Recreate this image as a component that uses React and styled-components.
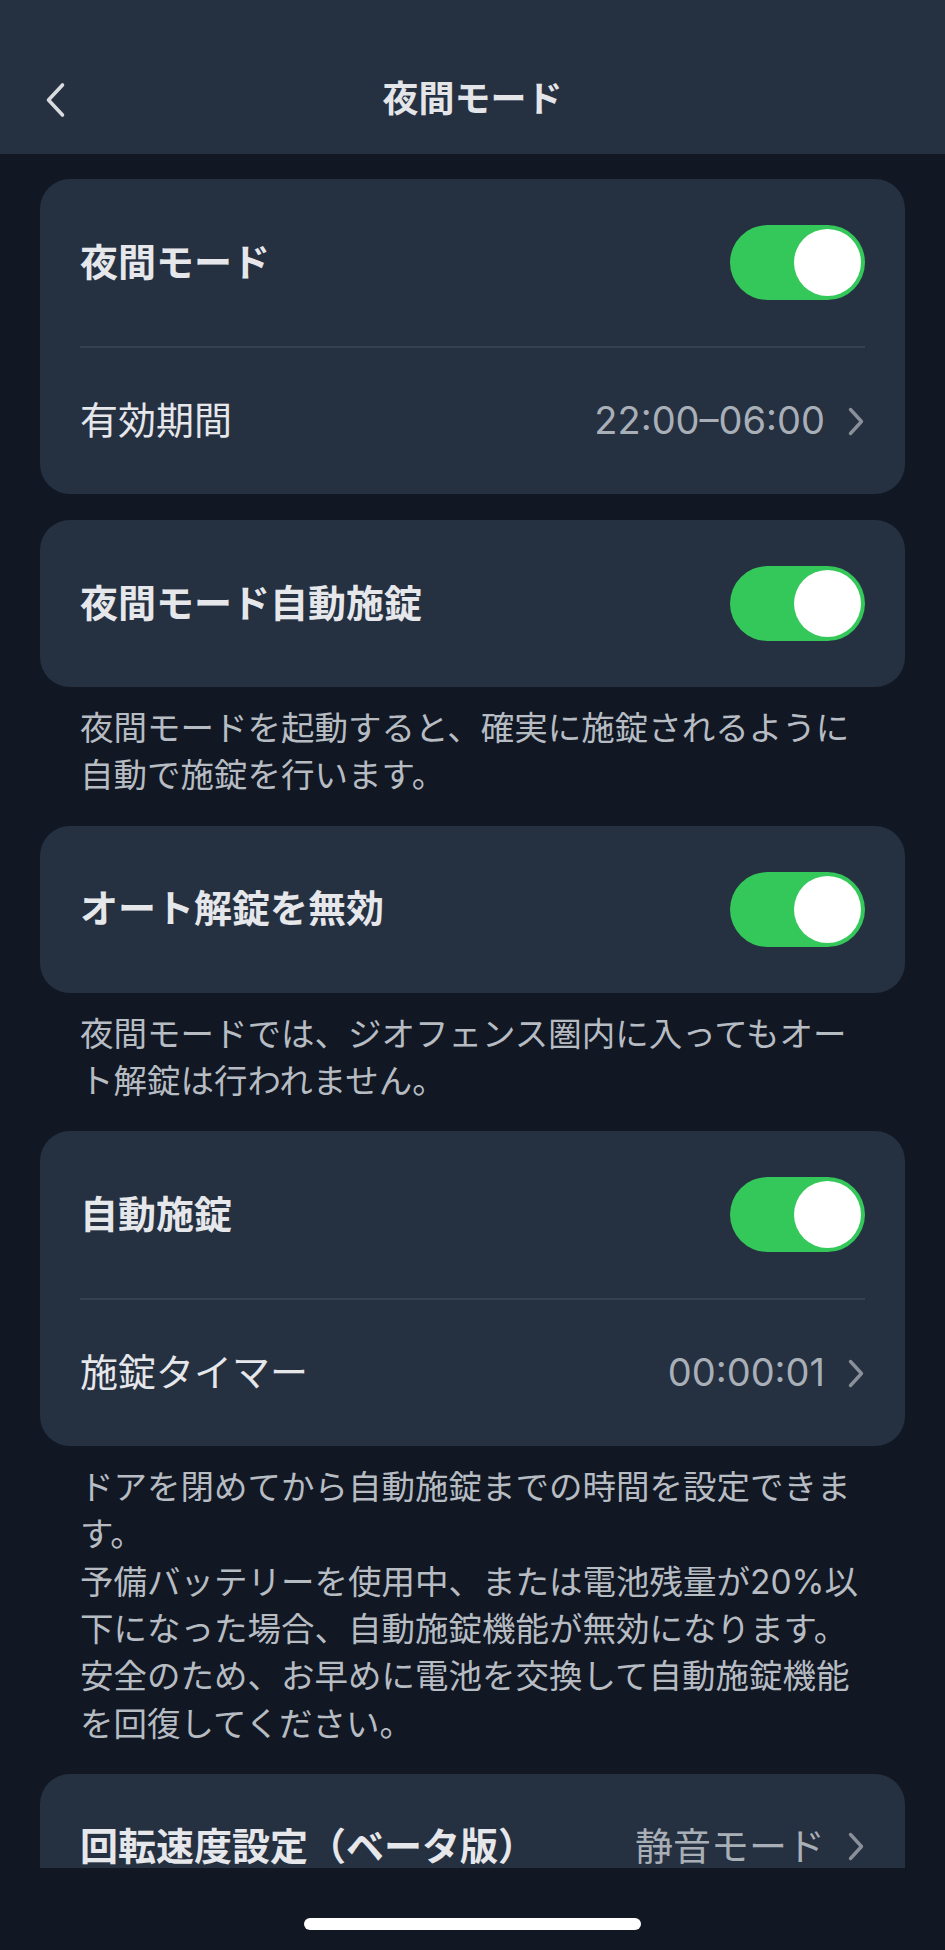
import styled, { createGlobalStyle } from "styled-components"

const GlobalStyle = createGlobalStyle`
  html, body {
    margin: 0;
    padding: 0;
    background: #111823;
  }
  body {
    font-family: Inter, "Noto Sans CJK JP", sans-serif;
    -webkit-font-smoothing: antialiased;
  }
`

const sections = [
  {
    rows: [
      { label: "夜間モード", toggle: true },
      { label: "有効期間", value: "22:00–06:00" },
    ],
  },
  {
    rows: [{ label: "夜間モード自動施錠", toggle: true }],
    note: "夜間モードを起動すると、確実に施錠されるように自動で施錠を行います。",
  },
  {
    rows: [{ label: "オート解錠を無効", toggle: true }],
    note: "夜間モードでは、ジオフェンス圏内に入ってもオート解錠は行われません。",
  },
  {
    rows: [
      { label: "自動施錠", toggle: true },
      { label: "施錠タイマー", value: "00:00:01" },
    ],
    note:
      "ドアを閉めてから自動施錠までの時間を設定できます。\n予備バッテリーを使用中、または電池残量が20%以下になった場合、自動施錠機能が無効になります。安全のため、お早めに電池を交換して自動施錠機能を回復してください。",
  },
  {
    rows: [{ label: "回転速度設定（ベータ版）", value: "静音モード", bold: true }],
  },
]

const App = () => {
  return (
    <Screen>
      <GlobalStyle />
      <Header>
        <NavBar>
          <BackButton>
            <svg width="22" height="36" viewBox="0 0 22 36" fill="none">
              <path
                d="M18.5 3 L4.5 18 L18.5 33"
                stroke="#d9dbde"
                strokeWidth="3.6"
                strokeLinecap="round"
                strokeLinejoin="round"
              />
            </svg>
          </BackButton>
          <Title>夜間モード</Title>
          <span />
        </NavBar>
      </Header>

      <Scroll>
        {sections.map((section, i) => (
          <Section key={i}>
            <Card>
              {section.rows.map((row, j) => (
                <div key={j}>
                  {j > 0 && <Divider />}
                  <Row $tall={row.toggle}>
                    <Label $bold={row.toggle || row.bold}>{row.label}</Label>
                    {row.toggle ? (
                      <Toggle>
                        <Knob />
                      </Toggle>
                    ) : (
                      <ValueWrap>
                        <Value>{row.value}</Value>
                        <svg width="18" height="31" viewBox="0 0 18 31" fill="none">
                          <path
                            d="M3.5 3.5 L14.5 15.5 L3.5 27.5"
                            stroke="#8a9099"
                            strokeWidth="3.4"
                            strokeLinecap="round"
                            strokeLinejoin="round"
                          />
                        </svg>
                      </ValueWrap>
                    )}
                  </Row>
                </div>
              ))}
            </Card>
            {section.note && <Note>{section.note}</Note>}
          </Section>
        ))}
      </Scroll>

      <HomeBar>
        <HomeIndicator />
      </HomeBar>
    </Screen>
  )
}

const Screen = styled.div`
  width: 945px;
  height: 1950px;
  display: flex;
  flex-direction: column;
  background: #111823;
  overflow: hidden;
`

const Header = styled.header`
  height: 154px;
  padding-top: 45px;
  box-sizing: border-box;
  background: #253041;
  flex-shrink: 0;
`

const NavBar = styled.div`
  height: 109px;
  display: grid;
  grid-template-columns: 1fr auto 1fr;
  align-items: center;
  padding: 0 44px;
`

const BackButton = styled.div`
  display: flex;
  align-items: center;
  svg {
    display: block;
  }
`

const Title = styled.h1`
  margin: 0;
  font-size: 36px;
  font-weight: 700;
  color: #e3e5e8;
  line-height: 1.2;
`

const Scroll = styled.main`
  flex: 1;
  overflow: hidden;
  padding: 25px 40px 0;
  display: flex;
  flex-direction: column;
  gap: 26px;
`

const Section = styled.section`
  display: flex;
  flex-direction: column;
`

const Card = styled.div`
  background: #253041;
  border-radius: 30px;
  padding: 0 40px;
  flex-shrink: 0;
`

const Row = styled.div`
  height: ${(p) => (p.$tall ? "167px" : "146px")};
  display: flex;
  align-items: center;
  justify-content: space-between;
`

const Label = styled.span`
  font-size: 38px;
  font-weight: ${(p) => (p.$bold ? 700 : 400)};
  color: #e5e7ea;
  line-height: 1.2;
`

const ValueWrap = styled.div`
  display: flex;
  align-items: center;
  gap: 22px;
  svg {
    display: block;
  }
`

const Value = styled.span`
  font-size: 38px;
  font-weight: 400;
  color: #a9afb7;
  line-height: 1.2;
`

const Divider = styled.div`
  height: 2px;
  background: #354051;
`

const Toggle = styled.div`
  width: 135px;
  height: 75px;
  border-radius: 38px;
  background: #34c759;
  display: flex;
  align-items: center;
  justify-content: flex-end;
  padding: 0 4px;
  box-sizing: border-box;
`

const Knob = styled.div`
  width: 67px;
  height: 67px;
  border-radius: 50%;
  background: #ffffff;
`

const Note = styled.p`
  margin: 0;
  padding: 18px 40px 0;
  font-size: 33.5px;
  line-height: 47.3px;
  color: #b7bcc3;
  white-space: pre-line;
`

const HomeBar = styled.footer`
  height: 82px;
  flex-shrink: 0;
  display: flex;
  justify-content: center;
  padding-top: 50px;
  box-sizing: border-box;
  background: #111823;
`

const HomeIndicator = styled.div`
  width: 337px;
  height: 12px;
  border-radius: 6px;
  background: #ffffff;
`

export default App
